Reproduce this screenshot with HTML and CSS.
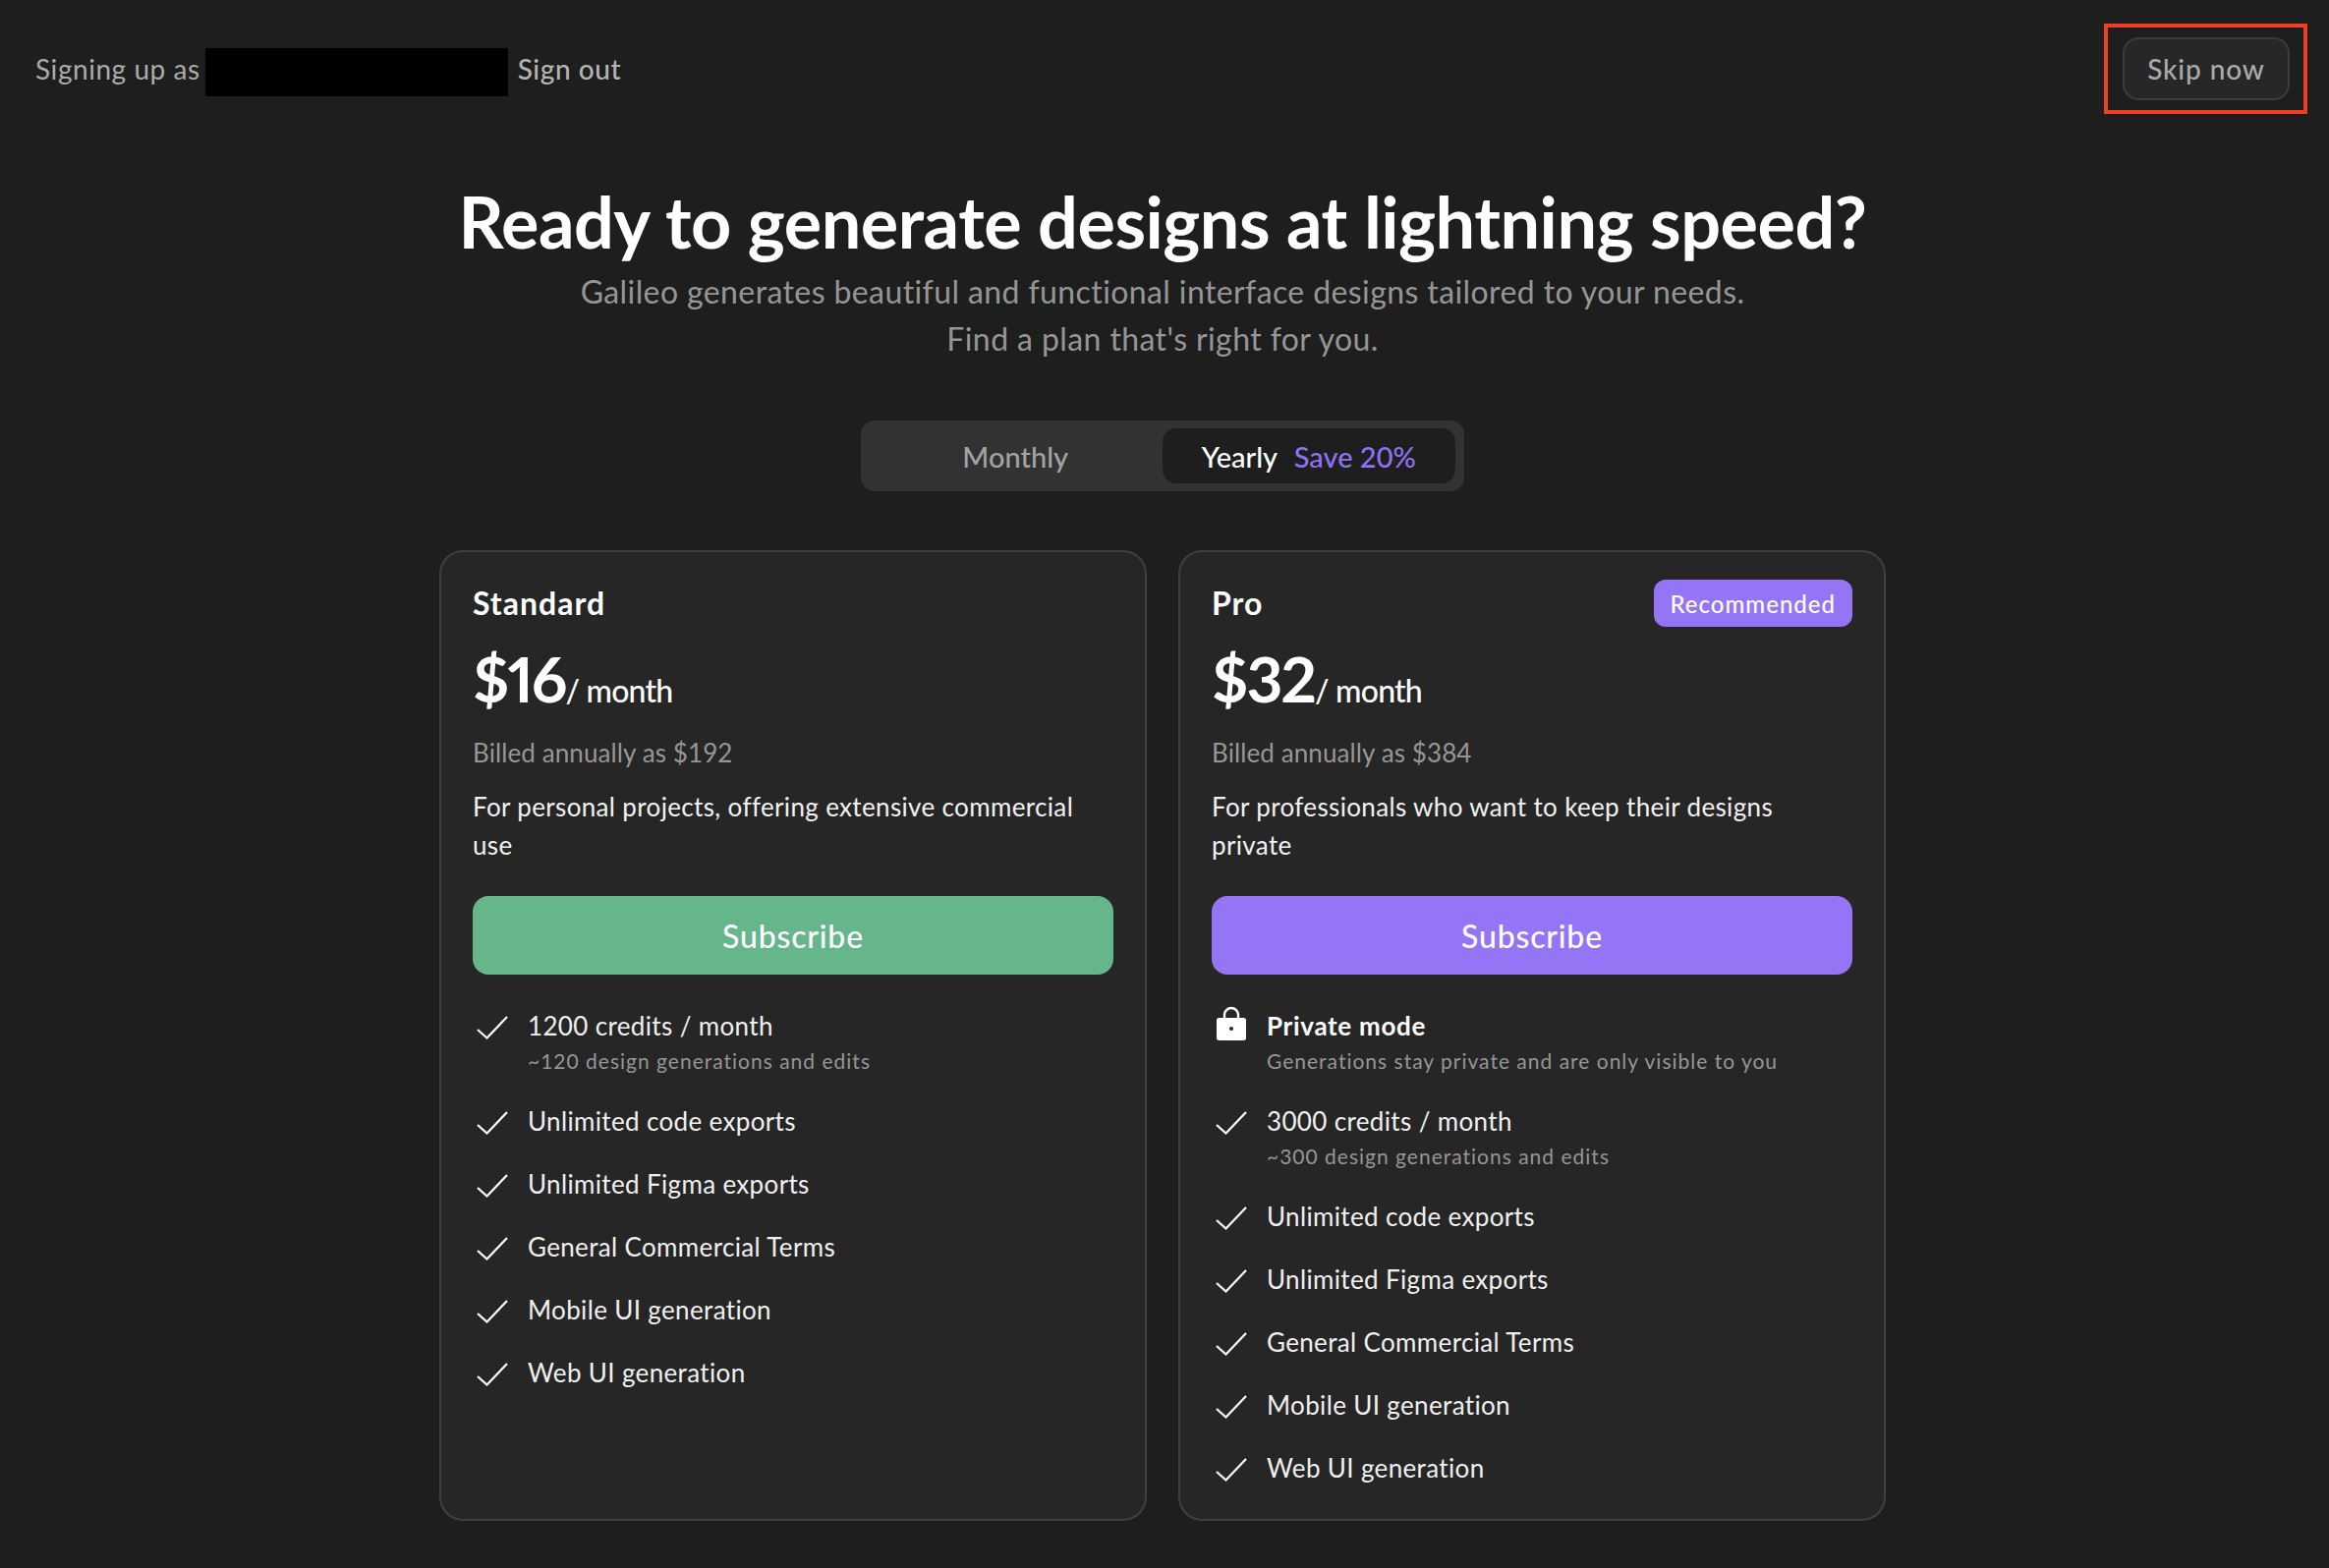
FILE: index.html
```html
<!DOCTYPE html>
<html lang="en">
<head>
    <meta charset="UTF-8">
    <meta name="viewport" content="width=device-width, initial-scale=1.0">
    <title>Galileo - Choose a plan</title>
    <link rel="stylesheet" href="styles.css">
</head>
<body>
    <svg class="icon-defs" width="0" height="0" aria-hidden="true">
        <symbol id="check" viewBox="0 0 32 24">
            <path d="M1 14 L10.5 22.5 L31 1" fill="none" stroke="currentColor" stroke-width="2.2"/>
        </symbol>
    </svg>

    <header class="topbar">
        <div class="account">
            <span>Signing up as</span>
            <span class="redacted"></span>
            <a class="sign-out" href="#">Sign out</a>
        </div>
        <button class="skip">Skip now</button>
        <div class="highlight"></div>
    </header>

    <main class="content">
        <h1 class="title">Ready to generate designs at lightning speed?</h1>
        <p class="subtitle">Galileo generates beautiful and functional interface designs tailored to your needs.<br>Find a plan that's right for you.</p>

        <div class="toggle">
            <button class="toggle-btn">Monthly</button>
            <button class="toggle-btn active">Yearly <span class="save">Save 20%</span></button>
        </div>

        <div class="plans">
            <section class="plan">
                <div class="plan-head">
                    <h2 class="plan-name">Standard</h2>
                </div>
                <div class="price"><strong>$16</strong><span>/ month</span></div>
                <p class="billed">Billed annually as $192</p>
                <p class="desc">For personal projects, offering extensive commercial use</p>
                <button class="subscribe green">Subscribe</button>
                <ul class="features">
                    <li>
                        <svg class="check"><use href="#check"/></svg>
                        <div>1200 credits / month<small>~120 design generations and edits</small></div>
                    </li>
                    <li><svg class="check"><use href="#check"/></svg><div>Unlimited code exports</div></li>
                    <li><svg class="check"><use href="#check"/></svg><div>Unlimited Figma exports</div></li>
                    <li><svg class="check"><use href="#check"/></svg><div>General Commercial Terms</div></li>
                    <li><svg class="check"><use href="#check"/></svg><div>Mobile UI generation</div></li>
                    <li><svg class="check"><use href="#check"/></svg><div>Web UI generation</div></li>
                </ul>
            </section>

            <section class="plan">
                <div class="plan-head">
                    <h2 class="plan-name">Pro</h2>
                    <span class="badge">Recommended</span>
                </div>
                <div class="price"><strong>$32</strong><span>/ month</span></div>
                <p class="billed">Billed annually as $384</p>
                <p class="desc">For professionals who want to keep their designs private</p>
                <button class="subscribe purple">Subscribe</button>
                <ul class="features">
                    <li>
                        <svg class="lock" viewBox="0 0 32 36">
                            <path d="M9 13 V9 a7 7 0 0 1 14 0 V13" fill="none" stroke="#fff" stroke-width="2.4"/>
                            <rect x="1" y="12" width="30" height="23" rx="2.5" fill="#fff"/>
                            <circle cx="16" cy="23" r="2" fill="#262626"/>
                        </svg>
                        <div><b>Private mode</b><small>Generations stay private and are only visible to you</small></div>
                    </li>
                    <li>
                        <svg class="check"><use href="#check"/></svg>
                        <div>3000 credits / month<small>~300 design generations and edits</small></div>
                    </li>
                    <li><svg class="check"><use href="#check"/></svg><div>Unlimited code exports</div></li>
                    <li><svg class="check"><use href="#check"/></svg><div>Unlimited Figma exports</div></li>
                    <li><svg class="check"><use href="#check"/></svg><div>General Commercial Terms</div></li>
                    <li><svg class="check"><use href="#check"/></svg><div>Mobile UI generation</div></li>
                    <li><svg class="check"><use href="#check"/></svg><div>Web UI generation</div></li>
                </ul>
            </section>
        </div>
    </main>
</body>
</html>
```

FILE: styles.css
```css
* {
    margin: 0;
    padding: 0;
    box-sizing: border-box;
}

body {
    background-color: #1e1e1e;
    color: #fff;
    font-family: "Lato", "Noto Sans", sans-serif;
    height: 1596px;
    overflow: hidden;
}

button {
    font-family: inherit;
    border: none;
}

.icon-defs {
    position: absolute;
}

.topbar {
    position: relative;
    display: flex;
    justify-content: space-between;
    align-items: center;
    padding: 38px 40px 0 36px;
}

.account {
    display: flex;
    align-items: center;
    font-size: 28px;
    letter-spacing: 0.55px;
    color: #ababab;
}

.redacted {
    width: 308px;
    height: 49px;
    margin: 6px 10px 0 5px;
    background-color: #000;
}

.sign-out {
    color: #b4b4b4;
    font-weight: 500;
    text-decoration: none;
}

.skip {
    width: 170px;
    height: 64px;
    background-color: #272727;
    border: 2px solid #3c3c3c;
    border-radius: 16px;
    color: #ababab;
    font-size: 28px;
    font-weight: 500;
    letter-spacing: 0.9px;
}

/* red annotation box round the skip button */
.highlight {
    position: absolute;
    top: 24px;
    right: 22px;
    width: 207px;
    height: 92px;
    border: 4px solid #ee4027;
}

.content {
    display: flex;
    flex-direction: column;
    align-items: center;
    padding-right: 4px;
}

.title {
    margin-top: 78px;
    font-size: 72px;
    line-height: 90px;
    font-weight: 700;
    letter-spacing: -0.5px;
}

.subtitle {
    margin-top: 3px;
    font-size: 32px;
    line-height: 48px;
    letter-spacing: 0.4px;
    text-align: center;
    color: #969696;
}

.toggle {
    display: flex;
    justify-content: space-between;
    width: 614px;
    height: 72px;
    margin-top: 59px;
    padding: 8px 9px 8px 8px;
    background-color: #323232;
    border-radius: 14px;
}

.toggle-btn {
    width: 299px;
    background: none;
    border-radius: 14px;
    color: #a3a3a3;
    font-size: 29px;
    font-weight: 500;
}

.toggle-btn.active {
    background-color: #1e1e1e;
    color: #fff;
}

.save {
    margin-left: 10px;
    color: #8f72f0;
}

.plans {
    display: flex;
    gap: 32px;
    margin-top: 60px;
    height: 988px;
}

.plan {
    width: 720px;
    padding: 28px 32px 0;
    background-color: #262626;
    border: 2px solid #3f3f3f;
    border-radius: 24px;
}

.plan-head {
    display: flex;
    justify-content: space-between;
    align-items: center;
    height: 48px;
}

.plan-name {
    font-size: 32px;
    font-weight: 700;
    letter-spacing: 1px;
    margin-top: -2px;
}

.badge {
    display: flex;
    align-items: center;
    height: 48px;
    padding: 0 17px;
    background-color: #9575f5;
    border-radius: 12px;
    font-size: 24px;
    font-weight: 500;
    letter-spacing: 1px;
}

.price {
    display: flex;
    align-items: baseline;
    margin-top: 17px;
    height: 72px;
    line-height: 72px;
}

.price strong {
    font-size: 64px;
    font-weight: 700;
    letter-spacing: -2px;
    font-variant-numeric: proportional-nums;
}

.price span {
    font-size: 32px;
    font-weight: 500;
    letter-spacing: -0.8px;
}

.billed {
    margin-top: 19px;
    font-size: 26px;
    line-height: 40px;
    letter-spacing: 0.1px;
    color: #969696;
}

.desc {
    margin-top: 16px;
    font-size: 26px;
    line-height: 39px;
    letter-spacing: 0.35px;
    color: #f2f2f2;
}

.subscribe {
    display: block;
    width: 100%;
    height: 80px;
    margin-top: 32px;
    border-radius: 16px;
    color: #fff;
    font-size: 32px;
    font-weight: 500;
    letter-spacing: 0.8px;
}

.subscribe.green {
    background-color: #65b68b;
}

.subscribe.purple {
    background-color: #9575f5;
}

.features {
    list-style: none;
    margin-top: 34px;
}

.features li {
    display: flex;
    gap: 20px;
    min-height: 64px;
    font-size: 26px;
    line-height: 36px;
    letter-spacing: 0.35px;
    color: #f0f0f0;
}

.features li:has(small) {
    min-height: 97px;
}

.features small {
    display: block;
    font-size: 21px;
    line-height: 36px;
    letter-spacing: 1px;
    color: #969696;
}

.features b {
    font-weight: 700;
    letter-spacing: 0.7px;
    color: #fff;
}

.check {
    flex: none;
    width: 32px;
    height: 24px;
    margin: 8px 0 0 4px;
    color: #fff;
}

.lock {
    flex: none;
    width: 32px;
    height: 36px;
    margin: -2px 0 0 4px;
}
```
